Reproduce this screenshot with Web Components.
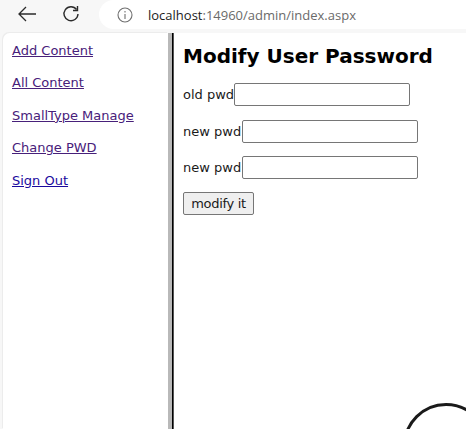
<!DOCTYPE html>
<html>
<head>
<meta charset="utf-8">
<title>Modify User Password</title>
<style>
    html, body { margin: 0; height: 100%; overflow: hidden; }
    body { background: #f7f7f7; font-family: "DejaVu Sans", Verdana, sans-serif; }
</style>
</head>
<body>
<admin-shell>
    <browser-bar slot="bar" host-name="localhost" rest=":14960/admin/index.aspx"></browser-bar>
    <side-menu slot="side">
        <a href="#add" class="v">Add Content</a>
        <a href="#all" class="v">All Content</a>
        <a href="#small" class="v">SmallType Manage</a>
        <a href="#pwd" class="v">Change PWD</a>
        <a href="#out">Sign Out</a>
    </side-menu>
    <password-form slot="main"></password-form>
</admin-shell>

<script>
class AdminShell extends HTMLElement {
    constructor() {
        super();
        this.attachShadow({ mode: 'open' });
        this.shadowRoot.innerHTML = `
            <style>
                :host { display: flex; flex-direction: column; height: 429px; position: relative; overflow: hidden; }
                .frames { flex: 1; display: flex; min-height: 0; padding-left: 3px; }
                .left { width: 165px; background: #fff; border-top-left-radius: 7px; box-shadow: -1px -1px 0 #ececec; }
                .split { flex: none; width: 1px; background: #000; border-left: 4px solid #b9b9b9; border-right: 1px solid #555; }
                .right { flex: 1; background: #fff; }
                .blob {
                    position: absolute; left: 403px; top: 403px; width: 80px; height: 80px;
                    border: 3px solid #1a1a1a; border-radius: 50%; background: #fff;
                }
            </style>
            <slot name="bar"></slot>
            <div class="frames">
                <div class="left"><slot name="side"></slot></div>
                <div class="split"></div>
                <div class="right"><slot name="main"></slot></div>
            </div>
            <div class="blob"></div>
        `;
    }
}

class BrowserBar extends HTMLElement {
    constructor() {
        super();
        this.attachShadow({ mode: 'open' });
        this.shadowRoot.innerHTML = `
            <style>
                :host { display: flex; align-items: flex-start; height: 33px; flex: none; background: #f7f7f7; box-sizing: border-box; }
                svg { flex: none; display: block; }
                .back { margin: 6px 0 0 17px; }
                .reload { margin: 5px 0 0 25px; }
                .url {
                    flex: 1; display: flex; align-items: center; height: 29px; margin-left: 19px;
                    background: #fff; border-bottom-left-radius: 15px; border-top-left-radius: 15px;
                    font: 13px "Open Sans", "Liberation Sans", sans-serif; color: #6a6a6a;
                }
                .info { margin: 0 0 0 18px; }
                .text { margin-left: 15px; }
                b { font-weight: normal; color: #1c1c1c; }
            </style>
            <svg class="back" width="20" height="16" viewBox="0 0 20 16" fill="none" stroke="#2b2b2b" stroke-width="1.3">
                <path d="M19 8H2M9 1 2 8l7 7"/>
            </svg>
            <svg class="reload" width="18" height="18" viewBox="0 0 18 18" fill="none" stroke="#2b2b2b" stroke-width="1.4">
                <path d="M14.6 4.5A7 7 0 1 0 16 9"/>
                <path d="M15.5 1v4.5H11"/>
            </svg>
            <div class="url">
                <svg class="info" width="16" height="16" viewBox="0 0 16 16" fill="none" stroke="#707070" stroke-width="1.1">
                    <circle cx="8" cy="8" r="7"/>
                    <path d="M8 7v5M8 4v1.5"/>
                </svg>
                <span class="text"><b></b><span></span></span>
            </div>
        `;
    }

    connectedCallback() {
        this.shadowRoot.querySelector('b').textContent = this.getAttribute('host-name');
        this.shadowRoot.querySelector('.text span').textContent = this.getAttribute('rest');
    }
}

class SideMenu extends HTMLElement {
    constructor() {
        super();
        this.attachShadow({ mode: 'open' });
        this.shadowRoot.innerHTML = `
            <style>
                :host { display: flex; flex-direction: column; align-items: flex-start; gap: 17px; padding: 9.6px 0 0 9px; font-size: 13px; line-height: 15.5px; }
                ::slotted(a) { color: #1a0a9e; }
                ::slotted(a.v) { color: #47207a; }
            </style>
            <slot></slot>
        `;
    }
}

class PasswordForm extends HTMLElement {
    constructor() {
        super();
        this.attachShadow({ mode: 'open' });
        this.shadowRoot.innerHTML = `
            <style>
                :host { display: block; padding: 9px 0 0 9px; font-size: 13px; color: #1a1a1a; }
                h1 { margin: 0 0 13px; font-size: 20px; line-height: 28px; font-weight: bold; white-space: nowrap; color: #000; }
                .row { display: flex; align-items: center; height: 23px; margin-bottom: 13px; }
                .row:first-of-type { margin-bottom: 14px; }
                /* new pwd labels sit 1px wider than ours in the reference */
                .row:not(:first-of-type) span { margin-right: 1px; }
                input {
                    width: 176px; height: 23px; box-sizing: border-box; margin: 0; padding: 1px 2px;
                    border: 1px solid #767676; border-radius: 2px; background: #fff;
                }
                button {
                    display: block; width: 71px; height: 23px; padding: 0; margin: 0;
                    border: 1px solid #767676; border-radius: 2px; background: #efefef;
                    font: 13px "DejaVu Sans", Verdana, sans-serif; letter-spacing: -0.3px; color: #1a1a1a;
                }
            </style>
            <h1>Modify User Password</h1>
            <div class="row"><span>old pwd</span><input type="password"></div>
            <div class="row"><span>new pwd</span><input type="password"></div>
            <div class="row"><span>new pwd</span><input type="password"></div>
            <button type="button">modify it</button>
        `;
    }
}

customElements.define('admin-shell', AdminShell);
customElements.define('browser-bar', BrowserBar);
customElements.define('side-menu', SideMenu);
customElements.define('password-form', PasswordForm);
</script>
</body>
</html>
